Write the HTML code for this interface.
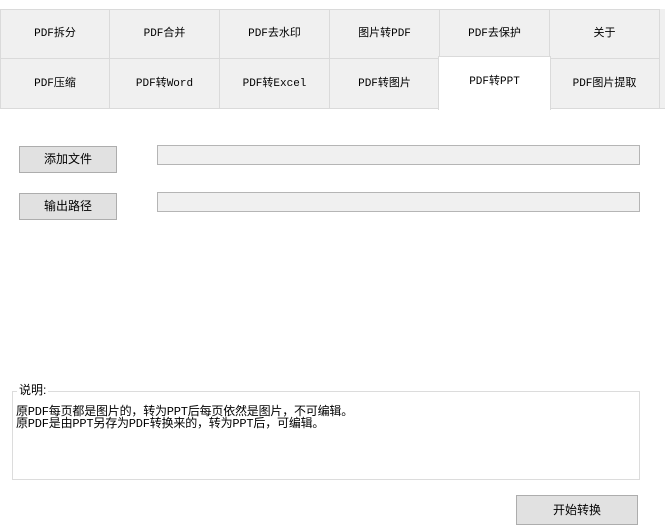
<!DOCTYPE html>
<html><head><meta charset="utf-8"><style>
body{margin:0;width:665px;height:532px;background:#fff;position:relative;overflow:hidden;font-family:"Liberation Mono","Noto Sans CJK SC",monospace;font-size:12px;color:#000}
.t{position:absolute;background:#f0f0f0;border:1px solid #dadada;box-sizing:border-box;text-align:center;font-size:11px}
.b{position:absolute;background:#e1e1e1;border:1px solid #adadad;box-sizing:border-box;text-align:center;font-family:"Liberation Sans","Noto Sans CJK SC",sans-serif;font-size:12px}
.f{position:absolute;background:#f0f0f0;border:1px solid #b5b5b5;box-sizing:border-box}
</style></head><body>
<div style="position:absolute;left:0;top:9px;width:665px;height:100px;background:#f0f0f0;border-bottom:1px solid #dadada;box-sizing:border-box"></div>
<div class="t" style="left:0;top:9px;width:110px;height:50px;line-height:48px">PDF拆分</div>
<div class="t" style="left:109px;top:9px;width:111px;height:50px;line-height:48px">PDF合并</div>
<div class="t" style="left:219px;top:9px;width:111px;height:50px;line-height:48px">PDF去水印</div>
<div class="t" style="left:329px;top:9px;width:111px;height:50px;line-height:48px">图片转PDF</div>
<div class="t" style="left:439px;top:9px;width:111px;height:50px;line-height:48px">PDF去保护</div>
<div class="t" style="left:549px;top:9px;width:111px;height:50px;line-height:48px">关于</div>
<div class="t" style="left:0;top:58px;width:110px;height:51px;line-height:50px">PDF压缩</div>
<div class="t" style="left:109px;top:58px;width:111px;height:51px;line-height:50px">PDF转Word</div>
<div class="t" style="left:219px;top:58px;width:111px;height:51px;line-height:50px">PDF转Excel</div>
<div class="t" style="left:329px;top:58px;width:111px;height:51px;line-height:50px">PDF转图片</div>
<div class="t" style="left:549px;top:58px;width:111px;height:51px;line-height:50px">PDF图片提取</div>
<div class="t" style="left:438px;top:56px;width:113px;height:54px;line-height:50px;background:#fff;border-bottom:none">PDF转PPT</div>
<div class="b" style="left:19px;top:146px;width:98px;height:27px;line-height:25px">添加文件</div>
<div class="b" style="left:19px;top:193px;width:98px;height:27px;line-height:25px">输出路径</div>
<div class="f" style="left:157px;top:145px;width:483px;height:20px"></div>
<div class="f" style="left:157px;top:192px;width:483px;height:20px"></div>
<div style="position:absolute;left:12px;top:391px;width:628px;height:89px;border:1px solid #dcdcdc;box-sizing:border-box"></div>
<div style="position:absolute;left:17px;top:382px;background:#fff;padding:0 2px;font-family:'Liberation Sans','Noto Sans CJK SC',sans-serif;line-height:16px">说明:</div>
<div style="position:absolute;left:16px;top:406px;line-height:12px;font-size:12px;letter-spacing:-0.2px">原PDF每页都是图片的，转为PPT后每页依然是图片，不可编辑。<br>原PDF是由PPT另存为PDF转换来的，转为PPT后，可编辑。</div>
<div class="b" style="left:516px;top:495px;width:122px;height:30px;line-height:28px">开始转换</div>
</body></html>
